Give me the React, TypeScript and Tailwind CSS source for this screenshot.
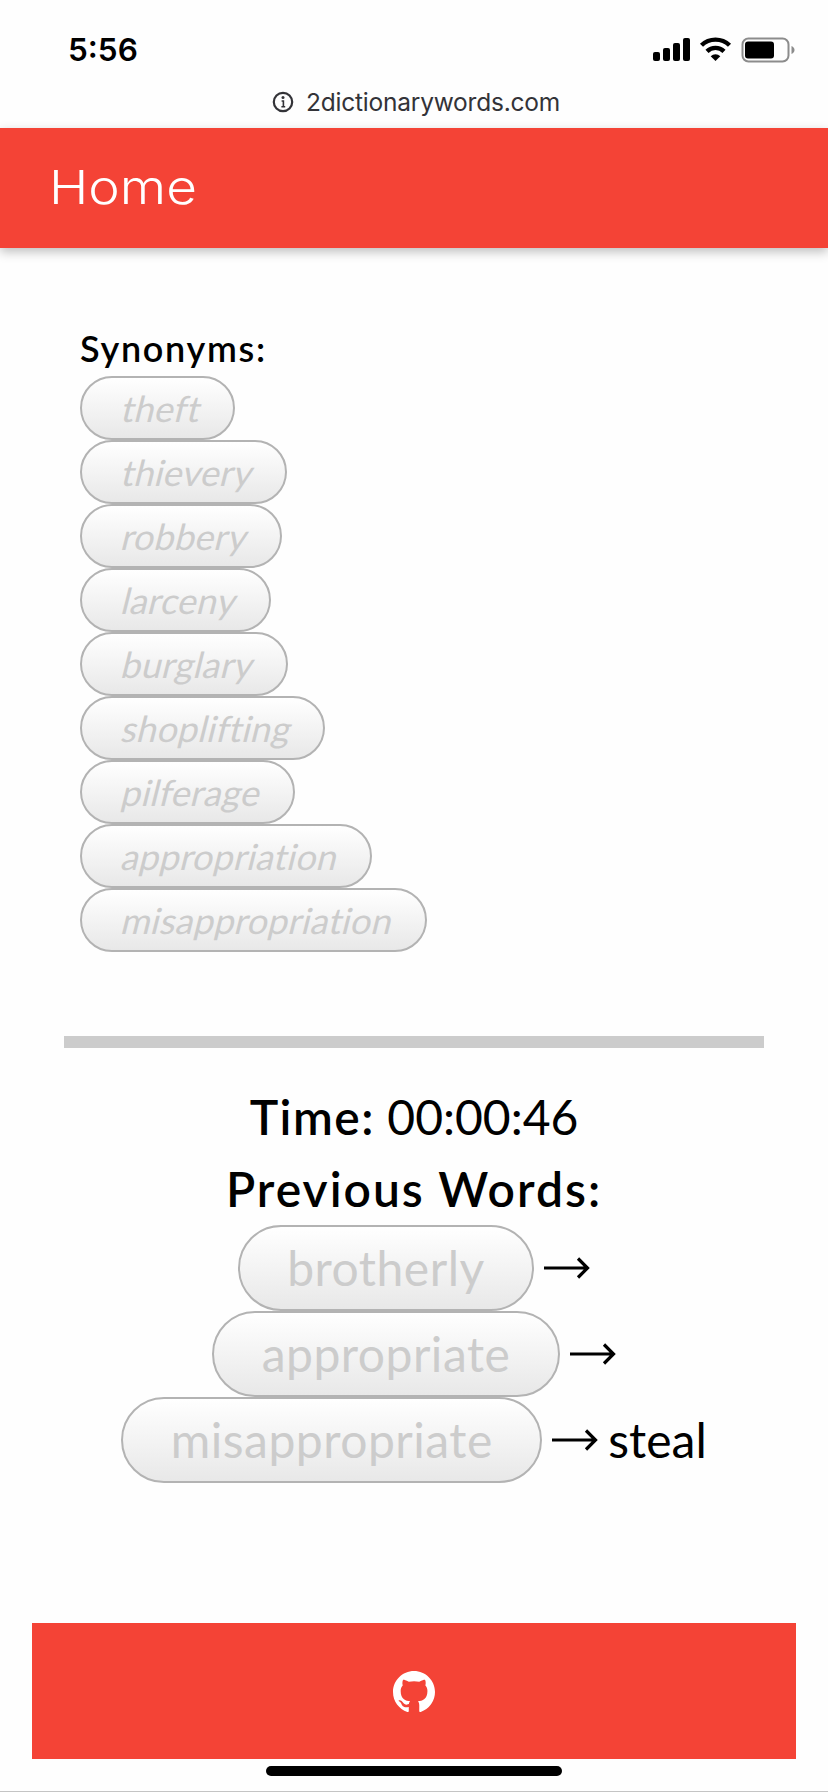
const synonyms = [
  'theft',
  'thievery',
  'robbery',
  'larceny',
  'burglary',
  'shoplifting',
  'pilferage',
  'appropriation',
  'misappropriation',
];

const previous = [
  { word: 'brotherly', next: '' },
  { word: 'appropriate', next: '' },
  { word: 'misappropriate', next: 'steal' },
];

function StatusBar() {
  return (
    <div className="flex h-[100px] items-center justify-between pl-[68px] pr-[33px] font-['Inter',sans-serif]">
      <span className="text-[31.5px] font-semibold leading-none text-black">5:56</span>
      <svg width="142" height="26" viewBox="0 0 142 26">
        <rect x="0" y="15" width="7" height="9" rx="2" />
        <rect x="10" y="11" width="7" height="13" rx="2" />
        <rect x="20" y="6" width="7" height="18" rx="2" />
        <rect x="30" y="1" width="7" height="23" rx="2" />
        <g fill="none" stroke="#000" strokeWidth="4.4">
          <path d="M48.5 8.3a20 20 0 0 1 28 0" />
          <path d="M54 14.3a12.2 12.2 0 0 1 17 0" />
        </g>
        <path d="M62.5 24l-4.8-4.8a7 7 0 0 1 9.6 0z" />
        <rect x="89.5" y="1.5" width="46" height="23" rx="6" fill="none" stroke="#8c8c8c" strokeWidth="2" />
        <rect x="92" y="4.5" width="29" height="17" rx="3" />
        <path d="M138.5 9c4 1.5 4 6.5 0 8z" fill="#8c8c8c" />
      </svg>
    </div>
  );
}

function AddressLine() {
  return (
    <div className="flex h-7 items-start justify-center gap-3 pl-1 text-[#333338]">
      <svg width="22" height="22" viewBox="0 0 22 22" className="mt-[-9px]">
        <circle cx="11" cy="11" r="9.2" fill="none" stroke="currentColor" strokeWidth="2.2" />
        <circle cx="11" cy="6.6" r="1.5" fill="currentColor" />
        <path d="M9.6 10h1.8v6M9.4 15.8h3.8" fill="none" stroke="currentColor" strokeWidth="1.6" />
      </svg>
      <span className="-mt-[13px] font-['Inter',sans-serif] text-[24.5px] leading-[30px] tracking-[-0.22px]">2dictionarywords.com</span>
    </div>
  );
}

function Arrow() {
  return (
    <svg width="46" height="24" viewBox="0 0 46 24" className="ml-2.5 shrink-0" fill="none" stroke="#000" strokeWidth="3.2">
      <path d="M0 12h44M34 2.5l9.5 9.5l-9.5 9.5" />
    </svg>
  );
}

export default function App() {
  return (
    <div className="flex h-[1792px] w-[828px] flex-col border-b border-[#c4c4c4] bg-[#fefefe] font-['Lato',sans-serif] text-black">
      <StatusBar />
      <AddressLine />
      <header className="flex h-[120px] shrink-0 items-center bg-[#f44336] pb-[3px] pl-[49px] shadow-[0_4px_10px_rgba(0,0,0,0.25)]">
        <a className="origin-left scale-x-[1.13] font-['Inter',sans-serif] text-[47px] font-light leading-none text-white">Home</a>
      </header>

      <section className="ml-20 mt-[81px] flex flex-col items-start">
        <h2 className="h-[47px] text-[36px] font-semibold leading-[38px] tracking-[1.7px]">Synonyms:</h2>
        {synonyms.map((word) => (
          <button
            key={word}
            disabled
            className="h-16 rounded-full border-2 border-[#b3b3b3] bg-linear-to-b from-white to-[#e8e8e8] pl-[38px] pr-[34px] text-[36px] leading-[57px] tracking-[0.25px] text-[#ccc] [font-variant-ligatures:none]"
          >
            <span className="inline-block origin-[50%_70%] -skew-x-[14deg]">{word}</span>
          </button>
        ))}
      </section>

      <hr className="mx-16 mt-[84px] h-3 shrink-0 border-0 bg-[#ccc]" />

      <section className="mt-[33px] flex flex-col items-center text-[48px]">
        <p className="h-[72px] leading-[72px]">
          <b className="font-semibold tracking-[1.5px]">Time:</b> 00:00:46
        </p>
        <h2 className="h-[72px] font-semibold leading-[72px] tracking-[2px]">Previous Words:</h2>
        {previous.map(({ word, next }) => (
          <div key={word} className="flex h-[86px] items-center">
            <button
              disabled
              className="h-[86px] rounded-full border-2 border-[#b3b3b3] bg-linear-to-b from-white to-[#e8e8e8] px-[47.5px] leading-[82px] tracking-[0.5px] text-[#ccc]"
            >
              {word}
            </button>
            <Arrow />
            {next && <span className="ml-2.5">{next}</span>}
          </div>
        ))}
      </section>

      <footer className="mx-8 mt-[140px] flex h-[136px] shrink-0 items-center justify-center bg-[#f44336]">
        <svg width="42" height="42" viewBox="0 0 16 16" fill="#fff" className="mt-0.5">
          <path d="M8 0C3.58 0 0 3.58 0 8c0 3.54 2.29 6.53 5.47 7.59.4.07.55-.17.55-.38 0-.19-.01-.82-.01-1.49-2.01.37-2.53-.49-2.69-.94-.09-.23-.48-.94-.82-1.13-.28-.15-.68-.52-.01-.53.63-.01 1.08.58 1.23.82.72 1.21 1.87.87 2.33.66.07-.52.28-.87.51-1.07-1.78-.2-3.64-.89-3.64-3.95 0-.87.31-1.59.82-2.15-.08-.2-.36-1.02.08-2.12 0 0 .67-.21 2.2.82.64-.18 1.32-.27 2-.27s1.36.09 2 .27c1.53-1.04 2.2-.82 2.2-.82.44 1.1.16 1.92.08 2.12.51.56.82 1.27.82 2.15 0 3.07-1.87 3.75-3.65 3.95.29.25.54.73.54 1.48 0 1.07-.01 1.93-.01 2.2 0 .21.15.46.55.38A8.01 8.01 0 0 0 16 8c0-4.42-3.58-8-8-8z" />
        </svg>
      </footer>
      <div className="mx-auto mt-[7px] h-2.5 w-[296px] shrink-0 rounded-full bg-black" />
    </div>
  );
}
